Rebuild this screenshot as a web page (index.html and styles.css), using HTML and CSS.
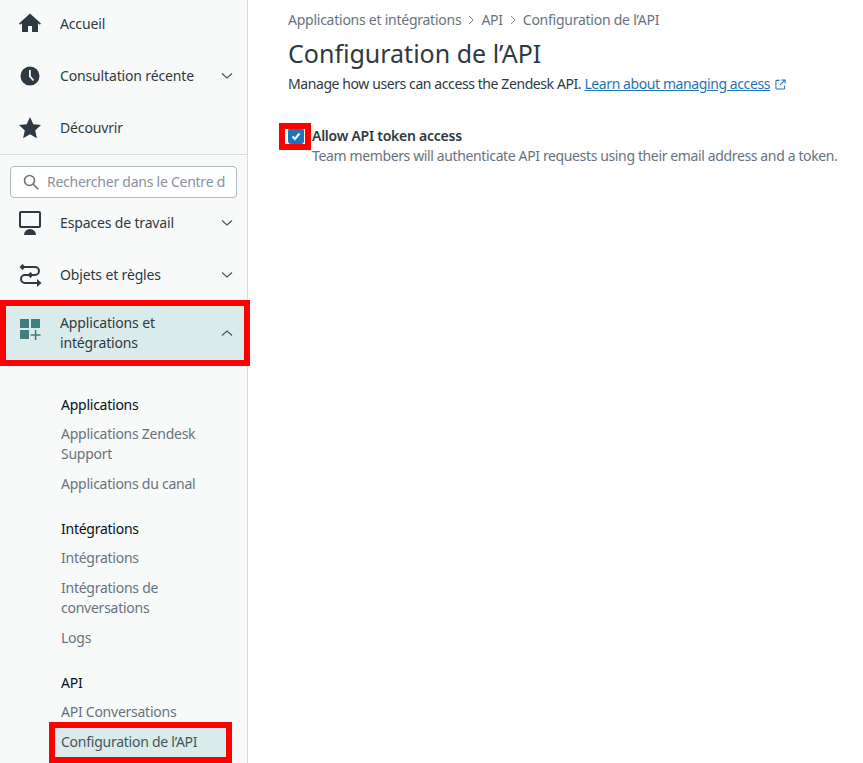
FILE: index.html
```html
<!DOCTYPE html>
<html lang="fr">
<head>
    <meta charset="UTF-8">
    <title>Configuration de l'API</title>
    <link rel="stylesheet" href="styles.css">
</head>
<body>
<div class="page">
    <!-- Sidebar -->
    <nav class="sidebar">
        <div class="nav-group nav-group-top">
            <div class="nav-item">
                <svg class="nav-icon" viewBox="0 0 24 24"><path d="M12 2.500 1 12.600l1.200 1.200L4 12.300V21h6v-6h4v6h6v-8.700l1.800 1.500 1.200-1.200z" transform="translate(0 -1)"/></svg>
                <span class="nav-label">Accueil</span>
            </div>
            <div class="nav-item">
                <svg class="nav-icon" viewBox="0 0 24 24"><path fill-rule="evenodd" d="M12 2.500a9.500 9.500 0 1 0 0 19 9.500 9.500 0 0 0 0-19zM11 6h1.800v6l3.400 4-1.300 1.100L11 12.700z"/></svg>
                <span class="nav-label">Consultation récente</span>
                <svg class="chevron" viewBox="0 0 12 12"><path d="M1 3.500 6 8l5-4.500"/></svg>
            </div>
            <div class="nav-item">
                <svg class="nav-icon" viewBox="0 0 24 24"><path d="m12 1 3.300 7.300 7.700.8-5.800 5.300 1.700 7.800L12 18.200l-6.900 4 1.700-7.800L1 9.100l7.700-.8z"/></svg>
                <span class="nav-label">Découvrir</span>
            </div>
        </div>

        <div class="search-wrap">
            <div class="search">
                <svg class="search-icon" viewBox="0 0 16 16"><circle cx="6.500" cy="6.500" r="5"/><path d="m10.200 10.200 5 5"/></svg>
                <span class="search-text">Rechercher dans le Centre d</span>
            </div>
        </div>

        <div class="nav-group">
            <div class="nav-item">
                <svg class="nav-icon" viewBox="0 0 24 24"><rect class="line" x="2" y="1" width="20" height="15" rx="1"/><path d="M6 24a6 6 0 0 1 12 0z"/></svg>
                <span class="nav-label">Espaces de travail</span>
                <svg class="chevron" viewBox="0 0 12 12"><path d="M1 3.500 6 8l5-4.500"/></svg>
            </div>
            <div class="nav-item">
                <svg class="nav-icon" viewBox="0 0 24 24"><path class="line" d="M4 4h13a4 4 0 0 1 0 8H7a4 4 0 0 0 0 8h14"/><path d="M4.500 1 7.500 4l-3 3-3-3zM12.500 9l3 3-3 3-3-3zM19 16l4.500 4-4.500 4z"/></svg>
                <span class="nav-label">Objets et règles</span>
                <svg class="chevron" viewBox="0 0 12 12"><path d="M1 3.500 6 8l5-4.500"/></svg>
            </div>
            <div class="nav-item nav-item-active">
                <svg class="nav-icon" viewBox="0 0 24 24"><rect x="2" y="2" width="9" height="9"/><rect x="13" y="2" width="9" height="9"/><rect x="2" y="13" width="9" height="9"/><path d="M16.800 13h1.600v4.200h4.200v1.600h-4.200V23h-1.600v-4.200h-4.200v-1.600h4.200z"/></svg>
                <span class="nav-label">Applications et<br>intégrations</span>
                <svg class="chevron" viewBox="0 0 12 12"><path d="M1 8.500 6 4l5 4.500"/></svg>
                <div class="annot annot-nav"></div>
            </div>
        </div>

        <div class="sub-nav">
            <div class="sub-section">
                <div class="sub-title">Applications</div>
                <div class="sub-link">Applications Zendesk<br>Support</div>
                <div class="sub-link">Applications du canal</div>
            </div>
            <div class="sub-section">
                <div class="sub-title">Intégrations</div>
                <div class="sub-link">Intégrations</div>
                <div class="sub-link">Intégrations de<br>conversations</div>
                <div class="sub-link">Logs</div>
            </div>
            <div class="sub-section">
                <div class="sub-title">API</div>
                <div class="sub-link">API Conversations</div>
                <div class="sub-link sub-link-active">Configuration de l’API<div class="annot annot-sub"></div></div>
            </div>
        </div>
    </nav>

    <!-- Main content -->
    <main class="content">
        <div class="breadcrumb">
            <span>Applications et intégrations</span>
            <svg class="crumb-sep" viewBox="0 0 12 12"><path d="M3.500 1 8.500 6l-5 5"/></svg>
            <span>API</span>
            <svg class="crumb-sep" viewBox="0 0 12 12"><path d="M3.500 1 8.500 6l-5 5"/></svg>
            <span>Configuration de l’API</span>
        </div>
        <h1 class="title">Configuration de l’API</h1>
        <p class="intro">Manage how users can access the Zendesk API. <a class="link" href="#">Learn about managing access</a><svg class="ext-icon" viewBox="0 0 12 12"><path d="M5 1.500H2a1 1 0 0 0-1 1v7.500a1 1 0 0 0 1 1h7.500a1 1 0 0 0 1-1V7M7 1h4v4M11 1 5.500 6.500"/></svg></p>

        <div class="option">
            <div class="checkbox-box">
                <div class="checkbox">
                    <svg viewBox="0 0 12 12"><path d="M2.500 6.500 5 9l4.500-5.500"/></svg>
                </div>
                <div class="annot annot-check"></div>
            </div>
            <div class="option-text">
                <div class="option-title">Allow API token access</div>
                <div class="option-hint">Team members will authenticate API requests using their email address and a token.</div>
            </div>
        </div>
    </main>
</div>
</body>
</html>
```

FILE: styles.css
```css
/* Basic Reset */
* {
    margin: 0;
    padding: 0;
    box-sizing: border-box;
}
body {
    font-family: "Noto Sans", "Open Sans", sans-serif;
    font-size: 14px;
    line-height: 20px;
    letter-spacing: -0.25px;
    color: #2f3941;
    background: #fff;
    height: 763px;
    overflow: hidden;
}
.page {
    display: flex;
    height: 763px;
    overflow: hidden;
}
/* Red annotation boxes */
.annot {
    position: absolute;
    border: 6px solid #ff0000;
    pointer-events: none;
}
.annot-nav {
    top: -6px;
    left: 0;
    width: 250px;
    height: 66px;
}
.annot-sub {
    top: -6px;
    left: -6px;
    width: 183px;
    height: 41px;
}
.annot-check {
    top: -3px;
    left: -9px;
    width: 32px;
    height: 27px;
}
/* Sidebar */
.sidebar {
    width: 248px;
    flex-shrink: 0;
    background: #f8f9f9;
    border-right: 1px solid #d8dcde;
    position: relative;
    z-index: 1;
}
.nav-group-top {
    margin-top: -2px;
}
.nav-item {
    display: flex;
    align-items: center;
    height: 52px;
    padding-left: 18px;
    position: relative;
}
.nav-icon {
    width: 24px;
    height: 24px;
    fill: #2f3941;
    flex-shrink: 0;
    margin-right: 18px;
}
.nav-icon .line {
    fill: none;
    stroke: #2f3941;
    stroke-width: 2;
}
.nav-label {
    flex: 1;
    white-space: nowrap;
    letter-spacing: -0.15px;
}
.chevron {
    width: 12px;
    height: 12px;
    fill: none;
    stroke: #49545c;
    stroke-width: 1.200;
    margin-right: 14px;
}
.nav-item-active {
    height: 54px;
    margin-top: 5px;
    background: #d9ebea;
    margin-right: -1px;
}
.nav-item-active .nav-icon {
    fill: #3f7f7f;
    margin-top: -8px;
}
.nav-item-active .chevron {
    margin-right: 15px;
}
.search-wrap {
    border-top: 1px solid #d8dcde;
    padding: 11px 10px 0;
    height: 43px;
}
.search {
    display: flex;
    align-items: center;
    height: 32px;
    background: #fff;
    border: 1px solid #b3bac0;
    border-radius: 4px;
    padding-left: 12px;
    overflow: hidden;
}
.search-icon {
    width: 16px;
    height: 16px;
    fill: none;
    stroke: #68737d;
    stroke-width: 1.600;
    flex-shrink: 0;
    margin-right: 8px;
}
.search-text {
    color: #87929d;
    white-space: nowrap;
}
/* Sub navigation */
.sub-nav {
    padding: 35px 0 0 61px;
}
.sub-section {
    margin-bottom: 25px;
}
.sub-title {
    color: #03111a;
    margin-bottom: 9px;
}
.sub-link {
    color: #68737d;
    margin-bottom: 10px;
}
.sub-link-active {
    color: #49545c;
    background: #d9ebea;
    position: relative;
    width: 171px;
    margin-left: -6px;
    padding-left: 6px;
    height: 29px;
    padding-top: 4px;
    margin-top: -4px;
}
/* Main content */
.content {
    flex: 1;
    padding: 10px 0 0 40px;
}
.breadcrumb {
    display: flex;
    align-items: center;
    color: #68737d;
    white-space: nowrap;
}
.crumb-sep {
    width: 10px;
    height: 10px;
    fill: none;
    stroke: #68737d;
    stroke-width: 1.100;
    margin: 0 5px;
}
.title {
    font-size: 25px;
    font-weight: 400;
    line-height: 32px;
    letter-spacing: 0;
    margin-top: 7px;
    color: #2f3941;
}
.intro {
    margin-top: 5px;
    white-space: nowrap;
    letter-spacing: -0.41px;
}
.link {
    color: #1f73b7;
}
.ext-icon {
    width: 11px;
    height: 11px;
    fill: none;
    stroke: #1f73b7;
    stroke-width: 1.100;
    margin-left: 5px;
    vertical-align: -1px;
}
.option {
    display: flex;
    margin-top: 32px;
}
.checkbox-box {
    position: relative;
    width: 24px;
    flex-shrink: 0;
    padding-top: 2px;
}
.checkbox {
    width: 16px;
    height: 16px;
    background: #1f73b7;
    border-radius: 3px;
    display: flex;
    align-items: center;
    justify-content: center;
}
.checkbox svg {
    width: 12px;
    height: 12px;
    fill: none;
    stroke: #fff;
    stroke-width: 2;
}
.option-title {
    font-weight: 600;
}
.option-hint {
    color: #68737d;
    white-space: nowrap;
    letter-spacing: -0.37px;
}
```
